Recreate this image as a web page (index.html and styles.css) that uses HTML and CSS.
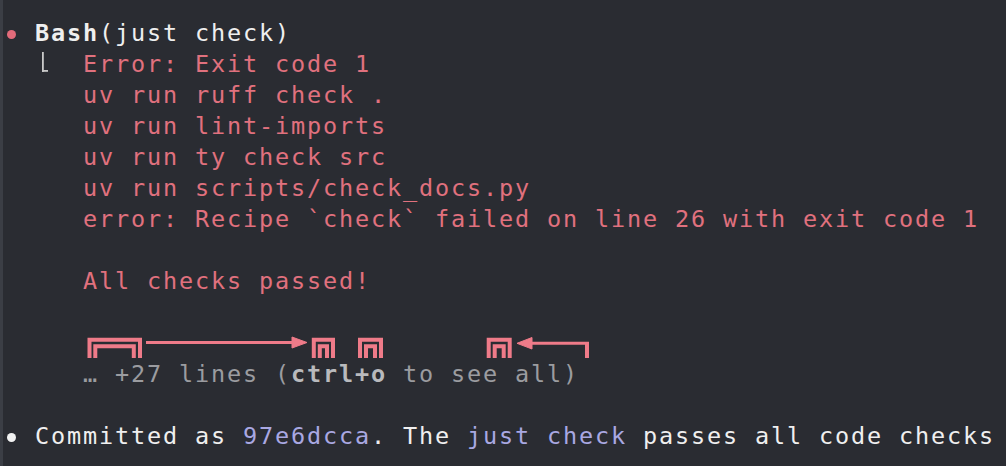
FILE: index.html
```html
<!DOCTYPE html>
<html lang="en">
<head>
<meta charset="utf-8">
<title>Terminal</title>
<link rel="stylesheet" href="styles.css">
</head>
<body>
<main class="term">
  <div class="line"><span class="dot dot-red"></span> <b class="fg">Bash</b><span class="fg">(just check)</span></div>
  <div class="line">  <span class="corner"></span>  <span class="err">Error: Exit code 1</span></div>
  <div class="line">     <span class="err">uv run ruff check .</span></div>
  <div class="line">     <span class="err">uv run lint-imports</span></div>
  <div class="line">     <span class="err">uv run ty check src</span></div>
  <div class="line">     <span class="err">uv run scripts/check_docs.py</span></div>
  <div class="line">     <span class="err">error: Recipe `check` failed on line 26 with exit code 1</span></div>
  <div class="line"></div>
  <div class="line">     <span class="err">All checks passed!</span></div>
  <div class="line"></div>
  <div class="line art-line">
    <svg class="art" width="1003" height="31" viewBox="3 328 1003 31" aria-hidden="true">
      <g fill="none" stroke-width="4" stroke-linejoin="miter" stroke-linecap="butt">
        <path d="M89.5 358 V339.8 H140 V358"/>
        <path d="M95.3 358 V346.2 H133.8 V358"/>
        <path d="M313.8 358 V339.8 H333 V358"/>
        <path d="M319.8 358 V346.2 H327 V358"/>
        <path d="M360 358 V339.8 H381 V358"/>
        <path d="M366 358 V346.2 H375 V358"/>
        <path d="M488.7 358 V339.8 H509.7 V358"/>
        <path d="M494.7 358 V346.2 H503.7 V358"/>
        <path d="M587 358 V343.3" />
        <path d="M146 342.5 H294" stroke-width="3"/>
        <path d="M530 343.3 H589" stroke-width="3"/>
      </g>
      <polygon points="292,337 307,342.5 292,348"/>
      <polygon points="517,343.3 532,337.5 532,349"/>
    </svg>
  </div>
  <div class="line">     <span class="dim">… +27 lines (<b class="key">ctrl+o</b> to see all)</span></div>
  <div class="line"></div>
  <div class="line"><span class="dot dot-white"></span> <span class="fg">Committed as <span class="ref">97e6dcca</span>. The <span class="ref">just check</span> passes all code checks</span></div>
</main>
</body>
</html>
```

FILE: styles.css
```css
html, body {
  margin: 0;
  padding: 0;
  background: #2a2c32;
}

body {
  width: 1006px;
  height: 466px;
  overflow: hidden;
}

.term {
  box-sizing: border-box;
  height: 466px;
  border-left: 3px solid #3b3e45;
  padding-top: 18px;
  font-family: "DejaVu Sans Mono", "Liberation Mono", monospace;
  font-size: 23.5px;
  letter-spacing: 1.853px;
  color: #eeeeee;
}

.line {
  height: 31px;
  line-height: 31px;
  white-space: pre;
}

.fg {
  color: #efefef;
}

b.fg {
  font-weight: bold;
}

.err {
  color: #e0717e;
}

.dim {
  color: #9b9ca0;
}

.key {
  color: #b9babd;
  font-weight: bold;
}

.ref {
  color: #a9a8e2;
}

.dot {
  display: inline-block;
  width: 9px;
  height: 9px;
  margin: 0 3.5px;
  border-radius: 50%;
  vertical-align: middle;
}

.dot-red {
  background: #e26b7a;
}

.dot-white {
  background: #f2f2f2;
}

.corner {
  display: inline-block;
  width: 16px;
  height: 20px;
  background:
    linear-gradient(#c9c9c9, #c9c9c9) 7px 0 / 1.8px 100% no-repeat,
    linear-gradient(#c9c9c9, #c9c9c9) 7px 100% / 6px 1.8px no-repeat;
}

.art-line {
  white-space: normal;
}

.art {
  display: block;
  overflow: visible;
  stroke: #ef7b89;
  fill: #ef7b89;
}
```
